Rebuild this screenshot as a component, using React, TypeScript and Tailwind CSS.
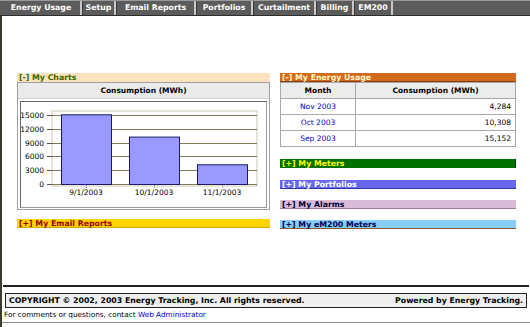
import React from "react";

const tabs: { label: string; w: string }[] = [
  { label: "Energy Usage", w: "w-[80px]" },
  { label: "Setup", w: "w-[34px]" },
  { label: "Email Reports", w: "w-[80px]" },
  { label: "Portfolios", w: "w-[57px]" },
  { label: "Curtailment", w: "w-[63px]" },
  { label: "Billing", w: "w-[38px]" },
  { label: "EM200", w: "w-[39px]" },
];

function Chart() {
  const y0 = 82;
  const k = 69 / 15000;
  const bars = [
    { x: 40, v: 15152, label: "9/1/2003" },
    { x: 108, v: 10308, label: "10/1/2003" },
    { x: 176, v: 4284, label: "11/1/2003" },
  ];
  const ticks = [0, 3000, 6000, 9000, 12000, 15000];
  return (
    <svg width="246" height="105" viewBox="0 0 246 105" className="block">
      <rect x="31" y="9" width="205" height="75" fill="#ffffff" stroke="#cfc8b4" strokeWidth="1" />
      {ticks.map((t) => {
        const y = Math.round(y0 - t * k) + 0.5;
        return (
          <g key={t}>
            <line x1="31" x2="236" y1={y} y2={y} stroke="#857a58" strokeWidth="1" />
            <line x1="26" x2="31" y1={y} y2={y} stroke="#555" strokeWidth="1" />
            <text x="23" y={y + 2.5} textAnchor="end" fontSize="7.5" fontFamily="DejaVu Sans" fill="#000">
              {t}
            </text>
          </g>
        );
      })}
      {bars.map((b) => {
        const h = b.v * k;
        return (
          <g key={b.label}>
            <rect x={b.x + 0.5} y={y0 - h + 0.5} width="50" height={h} fill="#9999ff" stroke="#1a1a66" strokeWidth="1" />
            <line x1={b.x + 25.5} x2={b.x + 25.5} y1={y0 + 1} y2={y0 + 4} stroke="#888" strokeWidth="1" strokeDasharray="1 1" />
            <text x={b.x + 25} y={y0 + 11} textAnchor="middle" fontSize="7.5" fontFamily="DejaVu Sans" fill="#000">
              {b.label}
            </text>
          </g>
        );
      })}
    </svg>
  );
}

function Header({ label, cls }: { label: string; cls: string }) {
  return (
    <div className={`h-[9px] leading-[9px] text-[7.8px] font-bold pl-[2px] whitespace-nowrap ${cls}`}>{label}</div>
  );
}

export default function App() {
  return (
    <div className="w-[530px] h-[327px] bg-white overflow-hidden font-['DejaVu_Sans',sans-serif] text-black">
      <div className="h-[16px] bg-[#5c5c5c] border-t border-t-[#9a9a9a] border-b border-b-[#2e2e2e] flex pl-[2px]">
        {tabs.map((t, i) => (
          <div
            key={t.label}
            className={`${t.w} h-full flex items-center justify-center text-white font-bold text-[7.8px] border-r-2 border-r-[#c8c8c8] ${i === 0 ? "" : "border-l border-l-[#3a3a3a]"}`}
          >
            {t.label}
          </div>
        ))}
      </div>
      <div className="h-[311px] border-l-2 border-l-[#3b3b33] flex flex-col">
        <div className="pt-[57px] pl-[15px] flex gap-[10px] items-start">
          <div className="w-[253px] flex flex-col">
            <Header label="[-] My Charts" cls="bg-[#fde2c0] text-[#2f6a00]" />
            <div className="border border-[#a0a0a0] bg-white h-[128px] flex flex-col">
              <div className="h-[16px] bg-[#ebebeb] flex items-center justify-center text-[7.5px] font-bold border-b border-b-[#d0d0d0]">
                Consumption (MWh)
              </div>
              <div className="mx-[2px] mt-[2px] border border-[#666] border-r-[#999] border-b-[#999] h-[107px]">
                <Chart />
              </div>
            </div>
            <div className="h-[9px]" />
            <Header label="[+] My Email Reports" cls="bg-[#ffd400] text-[#990000] border-b border-b-[#d4a800]" />
          </div>
          <div className="w-[236px] flex flex-col">
            <Header label="[-] My Energy Usage" cls="bg-[#d26a1e] text-[#fff7c8] border-b border-b-[#8a3a0a]" />
            <table className="w-full border-collapse text-[7.5px]">
              <thead>
                <tr className="h-[16px] bg-[#ececec]">
                  <th className="w-[75px] border border-[#a8a8a8] font-bold">Month</th>
                  <th className="border border-[#a8a8a8] font-bold">Consumption (MWh)</th>
                </tr>
              </thead>
              <tbody>
                {[
                  ["Nov 2003", "4,284"],
                  ["Oct 2003", "10,308"],
                  ["Sep 2003", "15,152"],
                ].map(([m, v]) => (
                  <tr key={m} className="h-[16px]">
                    <td className="border border-[#a8a8a8] text-center text-[#0000cc]">{m}</td>
                    <td className="border border-[#a8a8a8] text-right pr-[4px]">{v}</td>
                  </tr>
                ))}
              </tbody>
            </table>
            <div className="h-[12px]" />
            <Header label="[+] My Meters" cls="bg-[#007000] text-[#ffff00] border-r border-r-[#003300]" />
            <div className="h-[12px]" />
            <Header label="[+] My Portfolios" cls="bg-[#6868ee] text-white border-b border-b-[#3333aa]" />
            <div className="h-[11px]" />
            <Header label="[+] My Alarms" cls="bg-[#d8bcd8] text-[#000033] border-b border-b-[#9a7a9a]" />
            <div className="h-[11px]" />
            <Header label="[+] My eM200 Meters" cls="bg-[#86cdf8] text-[#000055] border-b border-b-[#8a5a3a]" />
          </div>
        </div>
        <div className="flex-1" />
        <div className="mx-[1px] border-t-2 border-t-[#222]" />
        <div className="mt-[6px] mx-[3px] h-[15px] border border-[#222] bg-[#efefef] flex items-center justify-between px-[3px] text-[7.8px] font-bold">
          <span>COPYRIGHT © 2002, 2003 Energy Tracking, Inc. All rights reserved.</span>
          <span>Powered by Energy Tracking.</span>
        </div>
        <div className="h-[14px] flex items-center pl-[2px] text-[7.3px]">
          For comments or questions, contact&nbsp;<span className="text-[#0000cc]">Web Administrator</span>
        </div>
        <div className="border-t border-t-[#8a8a8a] mb-[4px]" />
      </div>
    </div>
  );
}
